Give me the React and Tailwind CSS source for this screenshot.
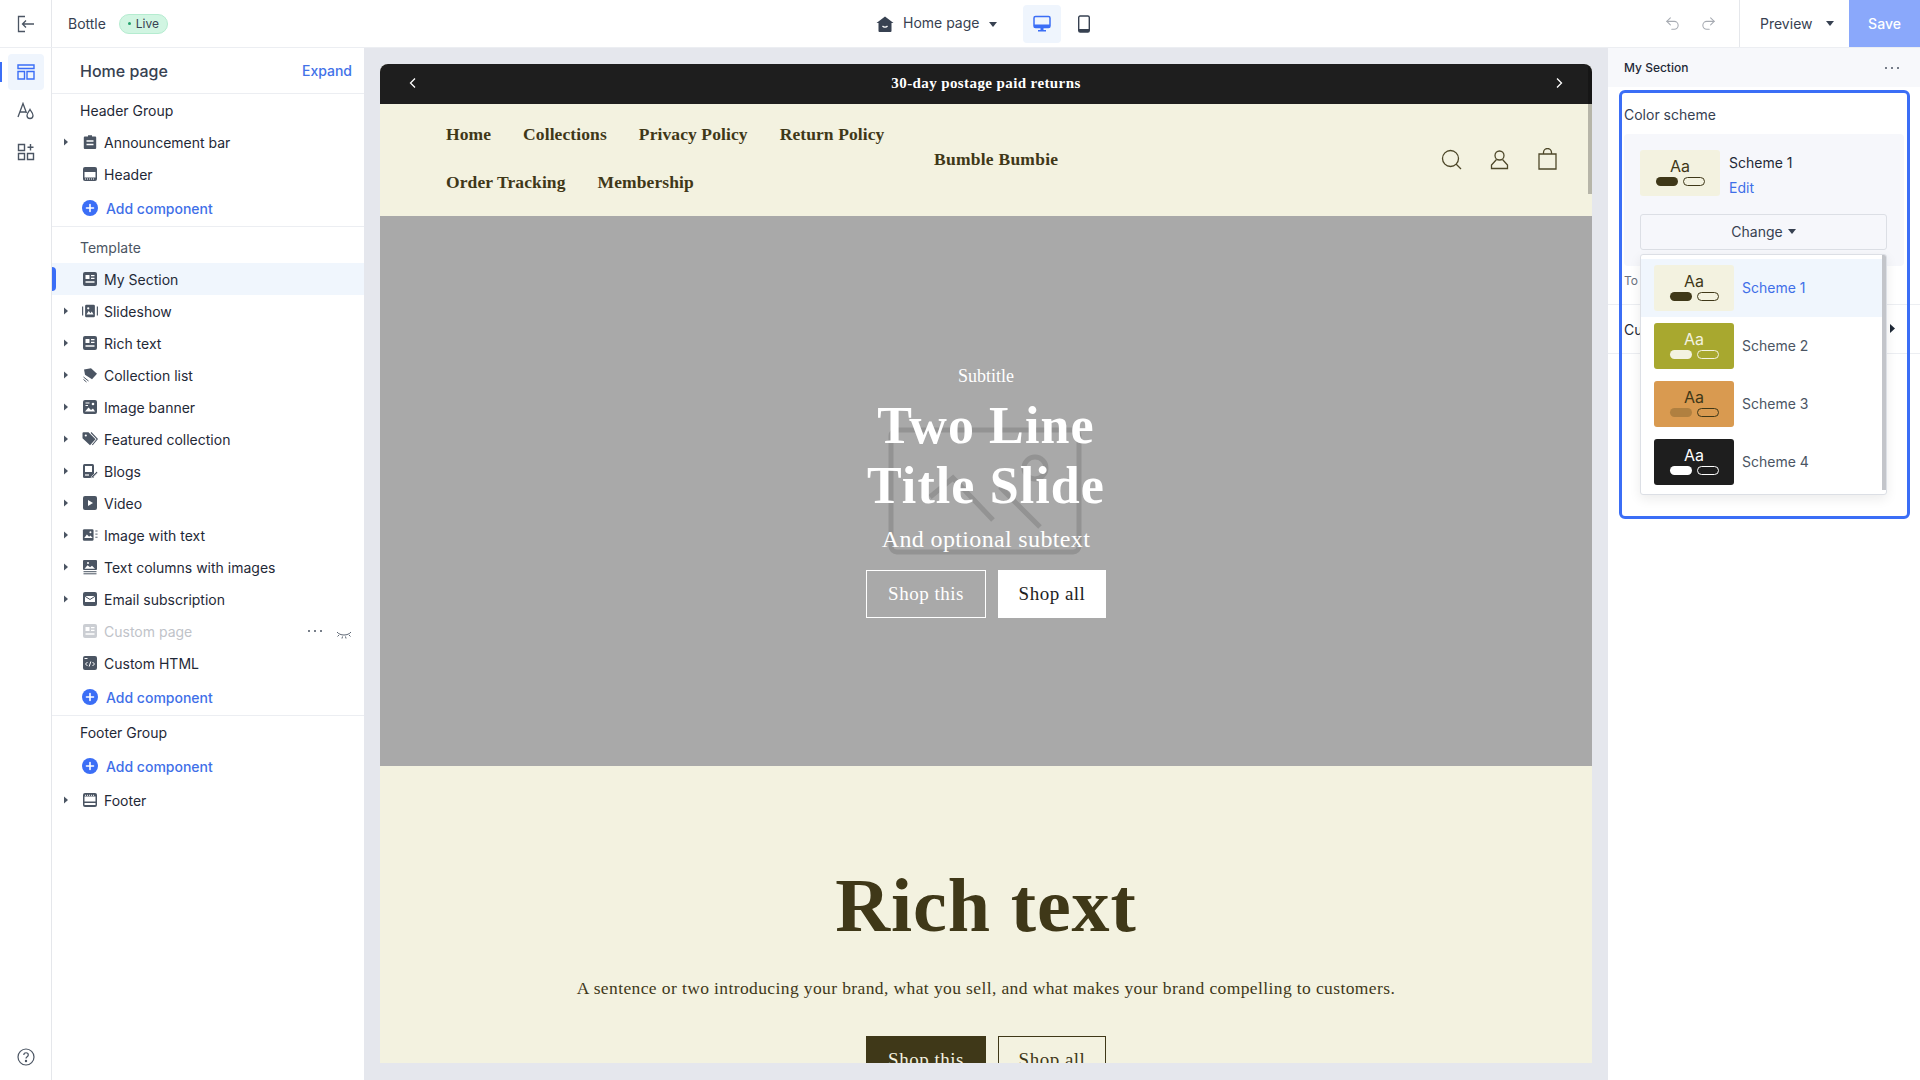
import React from "react";
import { Undo2, Redo2 } from "lucide-react";

const Caret = () => (
  <svg width="6" height="8" viewBox="0 0 6 8" className="absolute left-[11px] top-1/2 -translate-y-1/2"><path d="M1 0.500 L5 4 L1 7.500Z" fill="#4b5563" /></svg>
);

const Sq = ({ children, w = 16 }) => (
  <svg width={w} height="16" viewBox={`0 0 ${w} 16`}><rect x={(w - 14) / 2} y="1" width="14" height="14" rx="2" fill="currentColor" />{children}</svg>
);
const icons = {
  bag: <svg width="16" height="16" viewBox="0 0 16 16"><path d="M6 2.500V1.300h4v1.200h3.200a1 1 0 0 1 1 1V14a1 1 0 0 1-1 1H2.800a1 1 0 0 1-1-1V3.500a1 1 0 0 1 1-1Z" fill="currentColor" /><path d="M4.500 7h7M4.500 10.500h7" stroke="#fff" strokeWidth="1.300" /></svg>,
  header: <Sq><path d="M2.500 6h11v5.500h-11z" fill="#fff" /><path d="M3 13h10" stroke="#fff" strokeDasharray="1 1" /></Sq>,
  section: <Sq><path d="M3.500 4h4v4h-4z" fill="#fff" /><path d="M9 4.600h3.500M9 7.400h3.500M3.500 11h9" stroke="#fff" strokeWidth="1.300" /></Sq>,
  slides: <svg width="18" height="16" viewBox="0 0 18 16"><rect x="3.500" y="1" width="11" height="14" rx="1.500" fill="currentColor" /><path d="M0.700 3v10M17.300 3v10" stroke="currentColor" strokeWidth="1.300" /><path d="M5 12l2.500-4 2 2.500 1.500-2 2 3.500z" fill="#fff" /><circle cx="7" cy="5" r="1.300" fill="#fff" /></svg>,
  tag2: <svg width="16" height="16" viewBox="0 0 16 16"><path d="M2 2.500l7-1.300 6 5.500-5 5.500-7-4.500z" fill="currentColor" /><path d="M1.500 10l5 4M1.500 12.500l3 2.500" stroke="currentColor" strokeWidth="1" /></svg>,
  banner: <Sq><path d="M3 12.500l3.500-4 2.500 2.500 2-1.500 2 3z" fill="#fff" /><path d="M3.500 4h4M3.500 6.500h2.500" stroke="#fff" strokeWidth="1.200" /><circle cx="11" cy="5" r="1.300" fill="#fff" /></Sq>,
  tags: <svg width="16" height="16" viewBox="0 0 16 16"><path d="M0.500 2.200a1 1 0 0 1 1-1h5l7 7-5.500 6-7.500-7z" fill="currentColor" /><path d="M9 1.500l6.300 6.500-5 6" stroke="currentColor" fill="none" strokeWidth="1.100" /><circle cx="3.800" cy="4.500" r="1.100" fill="#fff" /></svg>,
  blog: <svg width="16" height="16" viewBox="0 0 16 16"><rect x="1" y="1" width="11" height="14" rx="1.500" fill="currentColor" /><path d="M3 3h7v6H3z" fill="#fff" /><path d="M3 12h4" stroke="#fff" strokeWidth="1.200" /><path d="M9.500 13.500l5-5 1.200 1.200-5 5-1.700.5z" fill="currentColor" stroke="#fff" strokeWidth=".6" /></svg>,
  video: <Sq><path d="M6 5l5 3-5 3z" fill="#fff" /></Sq>,
  imgText: <svg width="18" height="16" viewBox="0 0 18 16"><rect x="1" y="1.500" width="12" height="13" rx="1.500" fill="currentColor" /><path d="M2.500 11.500l3-4 2.500 2.500 1.500-1.500 2.500 3z" fill="#fff" /><circle cx="9.500" cy="5" r="1.100" fill="#fff" /><path d="M15 3.500h2.500M15 7h2.500M15 10.500h2.500" stroke="currentColor" strokeWidth="1" /></svg>,
  columns: <svg width="16" height="16" viewBox="0 0 16 16"><rect x="1" y="1" width="14" height="10" rx="1" fill="currentColor" /><path d="M2.500 9.800l3-3.500 2.500 2 2-1.500 3 3z" fill="#fff" /><circle cx="6" cy="4" r="1" fill="#fff" /><path d="M1.500 12.700h13M1.500 14.800h13" stroke="currentColor" strokeWidth="1" /></svg>,
  email: <Sq><path d="M3 5h10v6H3z" fill="#fff" /><path d="M3 5.300l5 3.200 5-3.200" stroke="currentColor" fill="none" /></Sq>,
  html: <Sq><path d="M2.500 3.500h3" stroke="#fff" /><path d="M5.500 7l-2 2 2 2M10.500 7l2 2-2 2M8.800 6.500l-1.600 5" stroke="#fff" strokeWidth="1" fill="none" /></Sq>,
  footer: <Sq><path d="M2.500 4.500h11v5h-11z" fill="#fff" /><path d="M3 3.300h10" stroke="#fff" strokeDasharray="1 1" /><path d="M2.500 11h11v2h-11z" fill="#fff" /></Sq>,
};

const Row = ({ icon, label, caret, active, faded, children }) => (
  <div className={`relative h-8 flex items-center pl-[30px] ${active ? "bg-[#f0f6fd]" : ""}`}>
    {caret && <Caret />}
    {active && <div className="absolute left-0 top-[4px] h-6 w-1 rounded-r bg-[#3b6ef6]" />}
    <div className={`w-4 flex justify-center mr-[6px] ${faded ? "text-[#cbced3]" : "text-[#4b5563]"}`}>{icons[icon]}</div>
    <span className={`text-[14px] ${faded ? "text-[#c0c3c9]" : "text-[#1f2937]"}`}>{label}</span>
    {children}
  </div>
);

const Add = () => (
  <div className="h-[36px] flex items-center pl-[30px]">
    <svg width="16" height="16" viewBox="0 0 16 16" className="mr-[6px] shrink-0"><circle cx="8" cy="8" r="8" fill="#3b6ef6" /><path d="M8 4.500v7M4.500 8h7" stroke="#fff" strokeWidth="1.600" strokeLinecap="round" /></svg>
    <span className="ml-[2px] text-[14px] font-medium text-[#3f6fe8]">Add component</span>
  </div>
);

const GroupLabel = ({ children, muted }) => (
  <div className={`pl-[28px] h-[32px] flex items-center text-[14px] ${muted ? "text-[#4b5563]" : "text-[#1f2937]"}`}>{children}</div>
);

const Dots = () => (
  <div className="flex gap-[4px]">
    <span className="w-[2px] h-[2px] rounded-full bg-[#4b5563]" /><span className="w-[2px] h-[2px] rounded-full bg-[#4b5563]" /><span className="w-[2px] h-[2px] rounded-full bg-[#4b5563]" />
  </div>
);

const Swatch = ({ bg, fg, pill, ring }) => (
  <div className="w-[80px] h-[46px] rounded-[3px] flex flex-col items-center justify-center shrink-0" style={{ backgroundColor: bg }}>
    <div className="text-[16px] leading-[19px] -mt-[3px]" style={{ color: fg }}>Aa</div>
    <div className="flex gap-[5px] mt-[1px]">
      <div className="w-[22px] h-[9px] rounded-full" style={{ backgroundColor: pill }} />
      <div className="w-[22px] h-[9px] rounded-full border" style={{ borderColor: ring }} />
    </div>
  </div>
);

const serif = "font-['Liberation_Serif',serif]";

export default function App() {
  return (
    <div className="h-screen w-screen overflow-hidden flex flex-col bg-white font-['Inter',sans-serif] text-[#1f2937]">
      {/* top bar */}
      <header className="h-[48px] shrink-0 flex items-center border-b border-[#eceef2] relative">
        <div className="w-[52px] h-full flex items-center justify-center border-r border-[#e5e7eb]">
          <svg width="18" height="18" viewBox="0 0 18 18" fill="none" stroke="#4b5563" strokeWidth="1.300"><path d="M8 1.500H1.500v15H8M17 9H5.500M9 5.500 5.500 9 9 12.500" /></svg>
        </div>
        <span className="ml-[16px] text-[14px] text-[#374151]">Bottle</span>
        <span className="ml-[13px] h-[20px] w-[49px] rounded-full bg-[#d1f5e2] border border-[#b5ecd0] flex items-center justify-center text-[12px] text-[#374151]">
          <span className="w-[3px] h-[3px] rounded-full bg-[#22a06b] mr-[5px]" />Live
        </span>
        <div className="absolute left-[876px] top-[5px] flex items-center h-[38px]">
          <svg width="18" height="16" viewBox="0 0 18 16" className="mr-[9px]"><path d="M9 0.500 17.500 7H15.500V15a1 1 0 0 1-1 1H3.500a1 1 0 0 1-1-1V7H.5Z" fill="#374151" /><path d="M6.500 10c1.200 1.400 3.800 1.400 5 0" stroke="#fff" fill="none" strokeWidth="1.200" /></svg>
          <span className="text-[14px] leading-[20px] -mt-[2px] text-[#374151] w-[80px]">Home page</span>
          <svg width="8" height="5" viewBox="0 0 8 5" className="ml-[6px]"><path d="M0 0h8L4 5z" fill="#374151" /></svg>
          <div className="ml-[26px] w-[38px] h-[38px] rounded bg-[#eff5fd] flex items-center justify-center">
            <svg width="18" height="18" viewBox="0 0 18 18"><rect x="1" y="1.500" width="16" height="11" rx="1.500" fill="none" stroke="#3b6ef6" strokeWidth="1.500" /><path d="M1 9.500h16v3H1zM7.500 13h3v2h-3zM5 15h8v1.500H5z" fill="#3b6ef6" /></svg>
          </div>
          <div className="ml-[16px]">
            <svg width="14" height="18" viewBox="0 0 14 18"><rect x="1.700" y="1" width="10.600" height="16" rx="1.500" fill="none" stroke="#374151" strokeWidth="1.400" /><path d="M2 14h10v3H2z" fill="#374151" /></svg>
          </div>
        </div>
        <div className="ml-auto flex items-center h-full">
          <Undo2 size={17} color="#a7abb2" strokeWidth={1.500} />
          <Redo2 size={17} color="#a7abb2" strokeWidth={1.500} className="ml-[19px]" />
          <div className="ml-[22px] h-full border-l border-[#e5e7eb] w-[110px] flex items-center pl-[20px] text-[14px] text-[#374151]">
            Preview
            <svg width="8" height="5" viewBox="0 0 8 5" className="ml-[13px]"><path d="M0 0h8L4 5z" fill="#374151" /></svg>
          </div>
          <div className="w-[71px] h-full bg-[#8aa8fb] flex items-center justify-center text-[14px] font-medium text-white">Save</div>
        </div>
      </header>

      <main className="flex-1 flex min-h-0">
        {/* rail */}
        <nav className="w-[52px] shrink-0 border-r border-[#e5e7eb] flex flex-col items-center relative pt-[6px]">
          <div className="absolute left-0 top-[14px] h-5 w-[2px] bg-[#3b6ef6]" />
          <div className="w-[36px] h-[36px] rounded bg-[#eff5fd] flex items-center justify-center">
            <svg width="18" height="18" viewBox="0 0 18 18" fill="none" stroke="#3b6ef6" strokeWidth="1.400"><path d="M1 2h16v3.500H1zM1 8.500h6.500V16H1zM10 8.500h7V16h-7z" /></svg>
          </div>
          <svg width="18" height="18" viewBox="0 0 18 18" fill="none" stroke="#4b5563" strokeWidth="1.300" className="mt-[12px]"><path d="M1 15 6 1.500 9.500 11M3 10h6" /><path d="M13 7.500c-1 2-3 3.500-3 6a3 3 0 0 0 6 0c0-2.500-2-4-3-6Z" /></svg>
          <svg width="18" height="18" viewBox="0 0 18 18" fill="none" stroke="#4b5563" strokeWidth="1.400" className="mt-[23px]"><path d="M1.500 1.500h6v6h-6zM1.500 10.500h6v6h-6zM10.500 10.500h6v6h-6zM13.500 1v6.500M10.500 4.200h6" /></svg>
          <svg width="18" height="18" viewBox="0 0 18 18" fill="none" stroke="#4b5563" strokeWidth="1.200" className="mt-auto mb-[14px]"><circle cx="9" cy="9" r="8" /><path d="M6.800 7c0-3 4.500-3 4.500 0 0 1.800-2.300 1.700-2.300 3.500" /><circle cx="9" cy="13" r=".6" fill="#4b5563" /></svg>
        </nav>

        {/* sidebar */}
        <aside className="w-[312px] shrink-0 bg-white">
          <div className="h-[46px] pl-[28px] pr-[12px] flex items-center justify-between border-b border-[#eceef2]">
            <span className="text-[16px] font-medium text-[#374151]">Home page</span>
            <span className="text-[14px] font-medium text-[#4272e8]">Expand</span>
          </div>
          <GroupLabel>Header Group</GroupLabel>
          <Row icon="bag" label="Announcement bar" caret />
          <Row icon="header" label="Header" />
          <Add />
          <div className="border-b border-[#eceef2] mb-[4px]" />
          <GroupLabel muted>Template</GroupLabel>
          <Row icon="section" label="My Section" active />
          <Row icon="slides" label="Slideshow" caret />
          <Row icon="section" label="Rich text" caret />
          <Row icon="tag2" label="Collection list" caret />
          <Row icon="banner" label="Image banner" caret />
          <Row icon="tags" label="Featured collection" caret />
          <Row icon="blog" label="Blogs" caret />
          <Row icon="video" label="Video" caret />
          <Row icon="imgText" label="Image with text" caret />
          <Row icon="columns" label="Text columns with images" caret />
          <Row icon="email" label="Email subscription" caret />
          <Row icon="section" label="Custom page" faded>
            <div className="ml-auto mr-[42px]"><Dots /></div>
            <svg width="16" height="8" viewBox="0 0 16 8" className="absolute left-[284px] top-[16px]" fill="none" stroke="#4b5563" strokeWidth=".9"><path d="M1 1c3 4 11 4 14 0M3 4 1.500 5.500M6.500 5.500 6 7.500M9.500 5.500 10 7.500M13 4l1.500 1.500" /></svg>
          </Row>
          <Row icon="html" label="Custom HTML" />
          <Add />
          <div className="border-b border-[#eceef2]" />
          <GroupLabel>Footer Group</GroupLabel>
          <Add />
          <Row icon="footer" label="Footer" caret />
        </aside>

        {/* canvas */}
        <section className="flex-1 min-w-0 bg-[#e5e7ed] pt-[16px] px-[16px] pb-[17px]">
          <div className="h-full rounded-t-lg overflow-hidden relative bg-[#f3f2e0] flex flex-col">
            <div className="absolute right-0 top-0 h-[130px] w-[4px] bg-black/25 z-10" />
            <div className={`h-[40px] shrink-0 bg-[#1e1e1e] text-white flex items-center justify-between px-[28px] pb-[2px] ${serif}`}>
              <svg width="9" height="12" viewBox="0 0 9 12" fill="none" stroke="#fff" strokeWidth="1.300"><path d="M7 1.500 2.500 6 7 10.500" /></svg>
              <span className="text-[15px] font-bold tracking-[0.4px]">30-day postage paid returns</span>
              <svg width="9" height="12" viewBox="0 0 9 12" fill="none" stroke="#fff" strokeWidth="1.300"><path d="M2 1.500 6.500 6 2 10.500" /></svg>
            </div>
            <div className={`h-[112px] shrink-0 flex items-center pl-[66px] pr-[34px] pb-[2px] relative text-[#3f3818] ${serif}`}>
              <div className="w-[480px] -mt-[2px] flex flex-wrap gap-x-[32px] gap-y-[24px] text-[17.500px] leading-[24px] font-bold tracking-[0.1px]">
                <span>Home</span><span>Collections</span><span>Privacy Policy</span><span>Return Policy</span><span>Order Tracking</span><span>Membership</span>
              </div>
              <span className="ml-[8px] text-[17.500px] font-bold tracking-[0.25px]">Bumble Bumbie</span>
              <div className="ml-auto flex items-center gap-[27px]">
                <svg width="21" height="21" viewBox="0 0 21 21" fill="none" stroke="#4e4829" strokeWidth="1.300"><circle cx="9.500" cy="9.500" r="8" /><path d="m15 15 5 5" /></svg>
                <svg width="21" height="21" viewBox="0 0 21 21" fill="none" stroke="#4e4829" strokeWidth="1.300"><circle cx="10.500" cy="6.500" r="4.500" /><path d="M7.500 10.500 2.500 16v3.500h16V16l-5-5.500" /></svg>
                <svg width="21" height="22" viewBox="0 0 21 22" fill="none" stroke="#4e4829" strokeWidth="1.300"><path d="M2 6h17v15H2zM6.500 6V4.500a4 4 0 0 1 8 0V6" /></svg>
              </div>
            </div>
            <div className={`h-[550px] shrink-0 bg-[#a9a9a9] relative flex flex-col items-center text-white ${serif}`}>
              <svg width="196" height="130" viewBox="0 0 196 130" fill="none" stroke="#939393" strokeWidth="5" className="absolute left-[508px] top-[211px]"><rect x="3" y="3" width="188" height="122" rx="6" /><circle cx="147" cy="41" r="11" /><path d="M42 70 65 51 105 93M112 60 152 100" /></svg>
              <div className="relative mt-[148px] text-[18px] leading-[24px]">Subtitle</div>
              <div className="relative mt-[8px] text-[52px] leading-[60px] font-bold text-center tracking-[1.100px]">Two Line<br />Title Slide</div>
              <div className="relative mt-[6px] text-[24px] leading-[34px] tracking-[0.35px]">And optional subtext</div>
              <div className="relative mt-[14px] flex gap-[12px]">
                <div className="w-[120px] h-[48px] border border-white flex items-center justify-center text-[19px] tracking-[0.5px]">Shop this</div>
                <div className="w-[108px] h-[48px] bg-white text-[#1e1e1e] flex items-center justify-center text-[19px] tracking-[0.5px]">Shop all</div>
              </div>
            </div>
            <div className={`flex-1 flex flex-col items-center text-[#3f3818] ${serif}`}>
              <div className="mt-[99px] text-[76px] leading-[80px] font-bold tracking-[0.9px]">Rich text</div>
              <div className="mt-[31px] text-[17.500px] leading-[24px] tracking-[0.39px]">A sentence or two introducing your brand, what you sell, and what makes your brand compelling to customers.</div>
              <div className="mt-[36px] flex gap-[12px]">
                <div className="w-[120px] h-[48px] bg-[#3f3818] text-[#f3f2e0] flex items-center justify-center text-[19px] tracking-[0.5px]">Shop this</div>
                <div className="w-[108px] h-[48px] border border-[#3f3818] flex items-center justify-center text-[19px] tracking-[0.5px]">Shop all</div>
              </div>
            </div>
          </div>
        </section>

        {/* right panel */}
        <aside className="w-[312px] shrink-0 bg-white relative">
          <div className="h-[39px] bg-[#f7f8fb] flex items-center justify-between pl-[16px] pr-[21px]">
            <span className="text-[12px] font-medium text-[#1f2937]">My Section</span>
            <Dots />
          </div>
          <div className="h-[18px]" />
          <div className="pl-[16px] text-[14px] leading-[20px] text-[#374151]">Color scheme</div>
          <div className="ml-[16px] mr-[16px] mt-[9px] h-[132px] rounded bg-[#f6f7fb] pt-[16px] px-[16px]">
            <div className="flex">
              <Swatch bg="#f3f2e0" fg="#3f3818" pill="#3f3818" ring="#3f3818" />
              <div className="ml-[9px] text-[14px]">
                <div className="leading-[20px] text-[#1f2937] mt-[3px]">Scheme 1</div>
                <div className="mt-[5px] leading-[20px] text-[#3f6fe8]">Edit</div>
              </div>
            </div>
            <div className="mt-[16px] w-[247px] h-[36px] pb-[1px] rounded-[3px] border border-[#dcdfe5] flex items-center justify-center text-[14px] text-[#374151]">
              Change
              <svg width="8" height="5" viewBox="0 0 8 5" className="ml-[5px]"><path d="M0 0h8L4 5z" fill="#374151" /></svg>
            </div>
          </div>
          <div className="pl-[16px] mt-[6px] text-[12px] leading-[18px] text-[#6b7280]">To</div>
          <div className="mt-[14px] h-[50px] border-y border-[#eceef2] pl-[16px] flex items-center text-[14px] text-[#1f2937] relative">
            Cu
            <svg width="5" height="9" viewBox="0 0 5 9" className="absolute left-[282px] top-[19px]"><path d="M0 0l5 4.500L0 9z" fill="#1f2937" /></svg>
          </div>

          {/* focus outline */}
          <div className="absolute left-[11px] top-[42px] w-[291px] h-[429px] rounded-[6px] border-[3px] border-[#3b6ef6] pointer-events-none" />

          {/* dropdown */}
          <div className="absolute left-[32px] top-[206px] w-[247px] h-[241px] bg-white border border-[#dcdfe5] rounded-[3px] shadow-[0_4px_12px_rgba(0,0,0,0.08)] overflow-hidden pt-[4px]">
            <div className="absolute right-0 top-0 bottom-[4px] w-[4px] bg-[#c3c5ca]" />
            {[
              { n: "Scheme 1", bg: "#f3f2e0", fg: "#3f3818", pill: "#3f3818", ring: "#3f3818", a: true },
              { n: "Scheme 2", bg: "#a8a82f", fg: "#f3f2e0", pill: "#f3f2e0", ring: "#f3f2e0" },
              { n: "Scheme 3", bg: "#d99a50", fg: "#3f3818", pill: "#b08040", ring: "#3f3818" },
              { n: "Scheme 4", bg: "#1e1e1e", fg: "#ffffff", pill: "#ffffff", ring: "#ffffff" },
            ].map((s) => (
              <div key={s.n} className={`h-[58px] flex items-center pl-[13px] ${s.a ? "bg-[#f0f6fd]" : ""}`}>
                <Swatch {...s} />
                <span className={`ml-[8px] -mt-[2px] text-[14px] ${s.a ? "text-[#3f6fe8]" : "text-[#4b5563]"}`}>{s.n}</span>
              </div>
            ))}
          </div>
        </aside>
      </main>
    </div>
  );
}
